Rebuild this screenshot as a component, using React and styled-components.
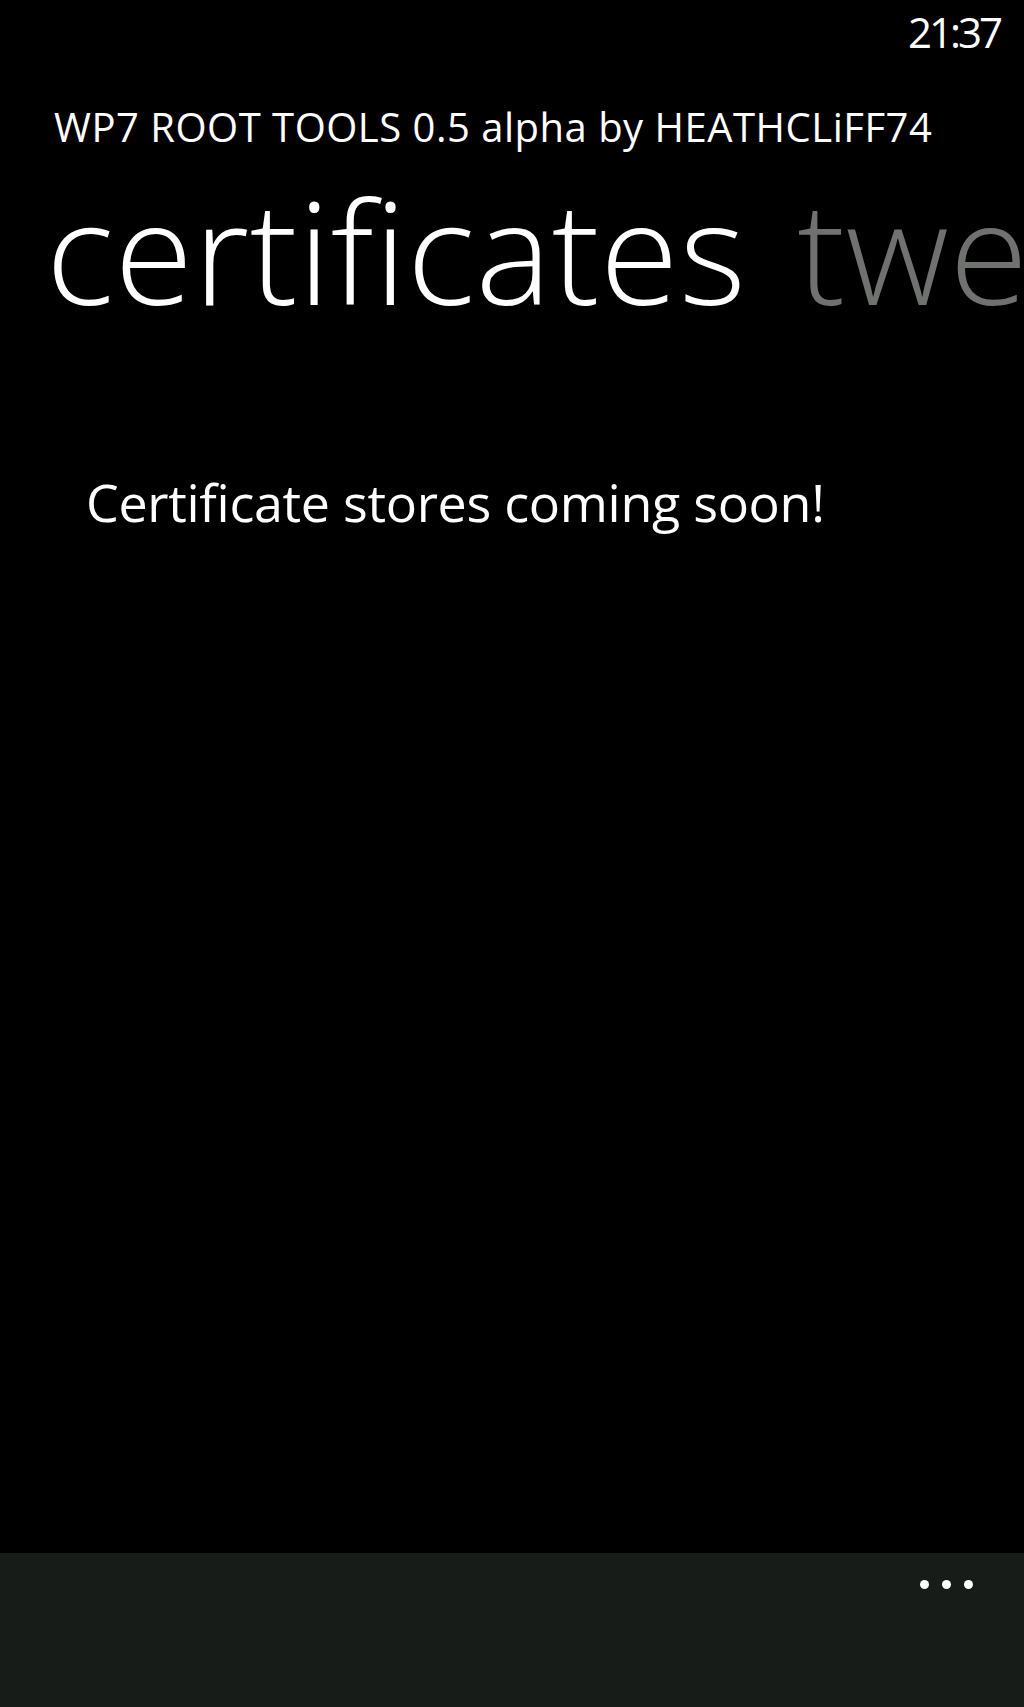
import React from "react";
import styled, { createGlobalStyle } from "styled-components";

const GlobalStyle = createGlobalStyle`
  html, body {
    margin: 0;
    padding: 0;
    background: #000;
  }
  body {
    font-family: "Open Sans", "Noto Sans", sans-serif;
    color: #fff;
  }
`;

const Screen = styled.div`
  width: 1024px;
  min-height: 1707px;
  display: flex;
  flex-direction: column;
  background: #000;
  overflow: hidden;
`;

const StatusBar = styled.div`
  height: 60px;
  box-sizing: border-box;
  padding: 11px 24px 0 0;
  display: flex;
  justify-content: flex-end;
`;

const Clock = styled.span`
  font-size: 42px;
  line-height: 42px;
  letter-spacing: -3px;
`;

const AppTitle = styled.div`
  margin-top: 47px;
  padding-left: 54px;
  font-size: 40px;
  line-height: 40px;
  letter-spacing: 0.5px;
  white-space: nowrap;
`;

const PivotRow = styled.div`
  margin-top: 31px;
  padding-left: 46px;
  display: flex;
  gap: 51px;
  white-space: nowrap;
`;

const PivotHeader = styled.span`
  font-size: 143px;
  line-height: 143px;
  font-weight: 300;
  letter-spacing: 0.5px;
  color: ${(p) => (p.active ? "#ffffff" : "#707270")};
`;

const Content = styled.div`
  flex: 1;
  padding: 155px 0 0 86px;
`;

const Message = styled.p`
  margin: 0;
  font-size: 52px;
  line-height: 52px;
  letter-spacing: -0.3px;
`;

const AppBar = styled.div`
  height: 154px;
  background: #181c19;
  display: flex;
  justify-content: flex-end;
  align-items: flex-start;
  padding: 27px 51px 0 0;
  box-sizing: border-box;
`;

const Dots = styled.div`
  display: flex;
  gap: 13px;
`;

const Dot = styled.span`
  width: 9px;
  height: 9px;
  border-radius: 50%;
  background: #fff;
`;

export default function App() {
  return (
    <>
      <GlobalStyle />
      <Screen>
        <StatusBar>
          <Clock>21:37</Clock>
        </StatusBar>
        <AppTitle>WP7 ROOT TOOLS 0.5 alpha by HEATHCLiFF74</AppTitle>
        <PivotRow>
          <PivotHeader active>certificates</PivotHeader>
          <PivotHeader>tweaks</PivotHeader>
        </PivotRow>
        <Content>
          <Message>Certificate stores coming soon!</Message>
        </Content>
        <AppBar>
          <Dots>
            <Dot />
            <Dot />
            <Dot />
          </Dots>
        </AppBar>
      </Screen>
    </>
  );
}
